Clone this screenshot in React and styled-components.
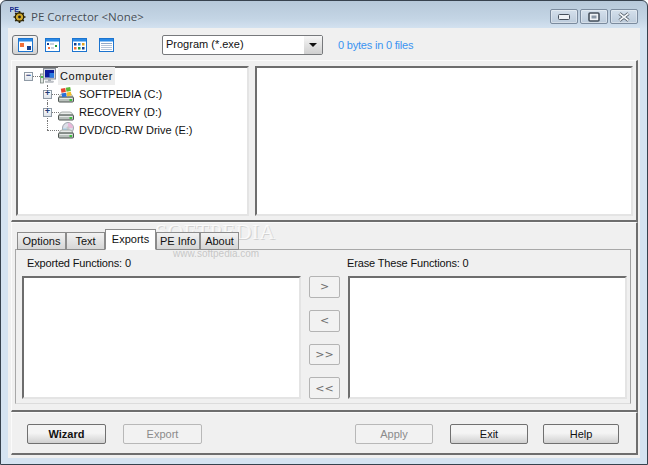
import styled, { createGlobalStyle } from 'styled-components';

const GlobalStyle = createGlobalStyle`
   html, body {
      margin: 0;
      padding: 0;
      background: #fff;
   }
`;

const UI_FONT = `'Liberation Sans', Arial, sans-serif`;

function AppIcon() {
   return (
      <svg width="17" height="17" viewBox="0 0 17 17">
         <text x="-0.5" y="6" fontSize="7" fontWeight="700" fontFamily="Liberation Sans" fill="#16288a">PE</text>
         <circle cx="9.5" cy="11" r="4.2" fill="#d1a92a" stroke="#2e2608" strokeWidth="1.3" />
         <circle cx="9.5" cy="11" r="1.4" fill="#1b1b1b" />
         <path d="M9.5 5v2.2M9.5 14.8v2.2M3.5 11h2.2M13.3 11h2.2M5.3 6.8l1.5 1.5M12.2 13.7l1.5 1.5M13.7 6.8l-1.5 1.5M6.8 13.7l-1.5 1.5" stroke="#2e2608" strokeWidth="1.7" />
      </svg>
   );
}

function ViewIcon({ kind }) {
   return (
      <svg width="15" height="14" viewBox="0 0 15 14">
         <rect x="0.5" y="0.5" width="14" height="13" fill="#fff" stroke="#1c74cf" />
         <rect x="1" y="1" width="13" height="2.5" fill="#2b8ae6" />
         {kind === 'large' && (
            <>
               <rect x="2" y="5" width="4" height="4" fill="#f0703a" />
               <rect x="9" y="8" width="4" height="4" fill="#14408f" />
            </>
         )}
         {kind === 'small' && (
            <>
               <rect x="2" y="5" width="2" height="2" fill="#14408f" />
               <rect x="5" y="5.5" width="4" height="1" fill="#9ab" />
               <rect x="3" y="9" width="2" height="2" fill="#f0703a" />
               <rect x="6" y="9.5" width="3" height="1" fill="#9ab" />
               <rect x="10" y="7" width="2" height="2" fill="#1f9d3a" />
            </>
         )}
         {kind === 'list' && (
            <>
               <rect x="2" y="5" width="2.5" height="2.5" fill="#14408f" />
               <rect x="6" y="5" width="2.5" height="2.5" fill="#1f7fd8" />
               <rect x="10" y="5" width="2.5" height="2.5" fill="#e0a020" />
               <rect x="2" y="9" width="2.5" height="2.5" fill="#f0703a" />
               <rect x="6" y="9" width="2.5" height="2.5" fill="#1f9d3a" />
               <rect x="10" y="9" width="2.5" height="2.5" fill="#14408f" />
            </>
         )}
         {kind === 'details' && (
            <>
               <rect x="2" y="5" width="11" height="1" fill="#8fa8c8" />
               <rect x="2" y="7" width="11" height="1" fill="#b5c4d8" />
               <rect x="2" y="9" width="11" height="1" fill="#b5c4d8" />
               <rect x="2" y="11" width="11" height="1" fill="#b5c4d8" />
            </>
         )}
      </svg>
   );
}

function ComputerIcon() {
   return (
      <svg width="16" height="17" viewBox="0 0 16 17">
         <rect x="0.5" y="6" width="3" height="9" fill="#dfe5e0" stroke="#7a8580" strokeWidth="0.8" />
         <rect x="1" y="8" width="2" height="2" fill="#4cc04c" />
         <rect x="3.5" y="0.5" width="12" height="10.5" fill="#d6d9de" stroke="#8a9098" />
         <rect x="5" y="2" width="9" height="7.5" fill="#0a1a9c" />
         <rect x="9.5" y="5" width="4.5" height="4.5" fill="#2a7ae0" />
         <rect x="8" y="11" width="3" height="2" fill="#aab0b6" />
         <rect x="5.5" y="13" width="8" height="1.5" fill="#c6cacf" stroke="#9a9fa6" strokeWidth="0.4" />
      </svg>
   );
}

function DriveBase() {
   return (
      <>
         <path d="M1 11 Q2 8 4 8 H12 Q14 8 15 11 Z" fill="#e8ebe9" stroke="#8a918d" strokeWidth="0.7" />
         <rect x="0.5" y="11" width="15" height="5" rx="1" fill="#b9c0bc" stroke="#4f5652" />
         <rect x="1.5" y="12" width="13" height="1" fill="#e6e9e7" />
         <rect x="11.5" y="13" width="2.5" height="2" fill="#3fc13f" />
      </>
   );
}

function DriveIcon({ kind }) {
   return (
      <svg width="16" height="17" viewBox="0 0 16 17">
         {kind === 'dvd' && (
            <>
               <circle cx="10" cy="6" r="5.5" fill="#dcdfe8" stroke="#8a8f9a" strokeWidth="0.8" />
               <path d="M10 1a5 5 0 0 1 5 5h-3.5a1.5 1.5 0 0 0-1.5-1.5z" fill="#e9b8d8" />
               <path d="M5 6a5 5 0 0 0 5 5V7.5A1.5 1.5 0 0 1 8.5 6z" fill="#b8d8ec" />
               <circle cx="10" cy="6" r="1" fill="#fff" stroke="#888" strokeWidth="0.5" />
            </>
         )}
         <DriveBase />
         {kind === 'system' && (
            <>
               <rect x="3" y="2.5" width="4.5" height="4" fill="#e8452c" transform="rotate(-10 5 4)" />
               <rect x="8" y="1.5" width="4.5" height="4" fill="#5fb83a" transform="rotate(-10 10 3)" />
               <rect x="3.8" y="7" width="4.5" height="4" fill="#2a6fd8" transform="rotate(-10 6 9)" />
               <rect x="8.8" y="6" width="4.5" height="4" fill="#f2c02a" transform="rotate(-10 11 8)" />
            </>
         )}
      </svg>
   );
}

function Tree() {
   return (
      <TreeRoot>
         <RootRow>
            <Expander>−</Expander>
            <ComputerIcon />
            <RootLabel>Computer</RootLabel>
         </RootRow>
         <ChildRow>
            <Expander>+</Expander>
            <DriveIcon kind="system" />
            <ChildLabel>SOFTPEDIA (C:)</ChildLabel>
         </ChildRow>
         <ChildRow>
            <Expander>+</Expander>
            <DriveIcon />
            <ChildLabel>RECOVERY (D:)</ChildLabel>
         </ChildRow>
         <ChildRow $last>
            <ExpanderGap />
            <DriveIcon kind="dvd" />
            <ChildLabel>DVD/CD-RW Drive (E:)</ChildLabel>
         </ChildRow>
      </TreeRoot>
   );
}

function App() {
   return (
      <Window>
         <GlobalStyle />
         <TitleBar>
            <AppIcon />
            <Title>PE Corrector &lt;None&gt;</Title>
            <Caption>
               <CaptionButton aria-label="minimize">
                  <svg width="12" height="6" viewBox="0 0 12 6"><rect x="0.5" y="0.5" width="11" height="5" rx="1" fill="#eef2f6" stroke="#46505c" /></svg>
               </CaptionButton>
               <CaptionButton aria-label="maximize">
                  <svg width="12" height="10" viewBox="0 0 12 10"><rect x="1" y="1" width="10" height="8" rx="1" fill="#eef2f6" stroke="#46505c" strokeWidth="1.6" /><rect x="3.5" y="3.5" width="5" height="3" fill="#8a97a6" /></svg>
               </CaptionButton>
               <CaptionButton aria-label="close">
                  <svg width="14" height="10" viewBox="0 0 14 10"><path d="M2.5 1.5L11.5 8.5M11.5 1.5L2.5 8.5" stroke="#4b5560" strokeWidth="3.4" /><path d="M2.5 1.5L11.5 8.5M11.5 1.5L2.5 8.5" stroke="#f2f5f8" strokeWidth="1.6" /></svg>
               </CaptionButton>
            </Caption>
         </TitleBar>

         <Client>
            <Toolbar>
               <ViewGroup>
                  <ViewButton $active><ViewIcon kind="large" /></ViewButton>
                  <ViewButton><ViewIcon kind="small" /></ViewButton>
                  <ViewButton><ViewIcon kind="list" /></ViewButton>
                  <ViewButton><ViewIcon kind="details" /></ViewButton>
               </ViewGroup>
               <Combo>
                  <ComboText>Program (*.exe)</ComboText>
                  <ComboArrow />
               </Combo>
               <Stats>0 bytes in 0 files</Stats>
            </Toolbar>

            <BrowseFrame>
               <TreePanel><Tree /></TreePanel>
               <FilePanel />
            </BrowseFrame>

            <TabFrame>
               <TabStrip>
                  <Tab $width={49}>Options</Tab>
                  <Tab $width={39}>Text</Tab>
                  <Tab $width={51} $active>Exports</Tab>
                  <Tab $width={44}>PE Info</Tab>
                  <Tab $width={39}>About</Tab>
               </TabStrip>
               <TabPane>
                  <LabelRow>
                     <Label>Exported Functions: 0</Label>
                     <Label $right>Erase These Functions: 0</Label>
                  </LabelRow>
                  <ListRow>
                     <LeftList />
                     <MoveColumn>
                        <MoveButton>&gt;</MoveButton>
                        <MoveButton>&lt;</MoveButton>
                        <MoveButton>&gt;&gt;</MoveButton>
                        <MoveButton>&lt;&lt;</MoveButton>
                     </MoveColumn>
                     <RightList />
                  </ListRow>
               </TabPane>
            </TabFrame>

            <ActionFrame>
               <ActionButton $width={79} $gap={17} $default>Wizard</ActionButton>
               <ActionButton $width={79} $gap={153} disabled>Export</ActionButton>
               <ActionButton $width={78} $gap={17} disabled>Apply</ActionButton>
               <ActionButton $width={78} $gap={15}>Exit</ActionButton>
               <ActionButton $width={76}>Help</ActionButton>
            </ActionFrame>
         </Client>

         <Watermark>
            <WatermarkTitle>SOFTPEDIA</WatermarkTitle>
            <WatermarkUrl>www.softpedia.com</WatermarkUrl>
         </Watermark>
      </Window>
   );
}

export default App;

const Window = styled.div`
   position: relative;
   box-sizing: border-box;
   width: 648px;
   height: 465px;
   display: flex;
   flex-direction: column;
   padding: 0 7px 6px;
   overflow: hidden;
   border: 1px solid #37424e;
   border-radius: 6px 6px 0 0;
   background: linear-gradient(#b6c8d9 0, #c4d5e5 18px, #d5e3f1 28px);
   font-family: ${UI_FONT};
   font-size: 11px;
   color: #111;
`;

const TitleBar = styled.div`
   height: 27px;
   flex: none;
   display: flex;
   align-items: center;
   gap: 4px;
   padding: 0 0 2px 2px;
   box-sizing: border-box;
   margin-right: 2px;
   svg {
      margin-top: 1px;
   }
`;

const Title = styled.div`
   flex: 1;
   font-family: 'Open Sans', ${UI_FONT};
   font-size: 11.5px;
   color: #474f58;
   text-shadow: 0 0 4px rgba(255, 255, 255, 0.6);
   margin-top: 6px;
`;

const Caption = styled.div`
   display: flex;
   gap: 2px;
   margin-top: 6px;
`;

const CaptionButton = styled.div`
   box-sizing: border-box;
   width: 28px;
   height: 15px;
   display: flex;
   align-items: center;
   justify-content: center;
   border: 1px solid #7b8b9e;
   border-radius: 2px;
   background: linear-gradient(#d4e0ec, #bccbdb);
   box-shadow: inset 0 0 0 1px rgba(255, 255, 255, 0.35);
`;

const Client = styled.div`
   flex: 1;
   min-height: 0;
   display: flex;
   flex-direction: column;
   background: #f0f0f0;
`;

const Toolbar = styled.div`
   height: 32px;
   flex: none;
   box-sizing: border-box;
   display: flex;
   align-items: center;
   padding: 1px 0 0 4px;
`;

const ViewGroup = styled.div`
   display: flex;
   gap: 1px;
   width: 150px;
`;

const ViewButton = styled.div`
   box-sizing: border-box;
   width: 26px;
   height: 20px;
   display: flex;
   align-items: center;
   justify-content: center;
   border: 1px solid ${(p) => (p.$active ? '#6f7378' : 'transparent')};
   border-radius: 3px;
   background: ${(p) => (p.$active ? 'linear-gradient(#f3f3f3, #d2d2d2)' : 'transparent')};
`;

const Combo = styled.div`
   box-sizing: border-box;
   width: 161px;
   height: 20px;
   display: flex;
   align-items: stretch;
   border: 1px solid #77797c;
   border-radius: 2px;
   background: #fff;
`;

const ComboText = styled.div`
   flex: 1;
   padding-left: 3px;
   line-height: 17px;
`;

const ComboArrow = styled.div`
   width: 18px;
   position: relative;
   background: linear-gradient(#f6f6f6, #cfcfcf);
   &::after {
      content: '';
      position: absolute;
      left: 5px;
      top: 7px;
      border-left: 4px solid transparent;
      border-right: 4px solid transparent;
      border-top: 4px solid #111;
   }
`;

const Stats = styled.div`
   margin-left: 15px;
   color: #3a93f0;
   letter-spacing: -0.2px;
`;

const BrowseFrame = styled.div`
   height: 162px;
   flex: none;
   box-sizing: border-box;
   display: flex;
   gap: 6px;
   margin: 0 2px 0 3px;
   padding: 5px 0 0 4px;
   border-top: 1px solid #fbfbfb;
   border-left: 1px solid #fbfbfb;
   border-right: 2px solid #6e6e6e;
   border-bottom: 2px solid #6e6e6e;
`;

const Sunken = styled.div`
   box-sizing: border-box;
   background: #fff;
   border-top: 2px solid #6d6d6d;
   border-left: 2px solid #6d6d6d;
   border-right: 2px solid #e4e4e4;
   border-bottom: 2px solid #e4e4e4;
`;

const TreePanel = styled(Sunken)`
   width: 233px;
   height: 150px;
`;

const FilePanel = styled(Sunken)`
   width: 378px;
   height: 150px;
`;

const TreeRoot = styled.div`
   display: flex;
   flex-direction: column;
   margin-top: -1px;
   padding: 0 0 0 6px;
`;

const RootRow = styled.div`
   height: 18px;
   display: flex;
   align-items: center;
   gap: 7px;
   position: relative;
   &::before {
      content: '';
      position: absolute;
      left: 9px;
      width: 7px;
      top: 9px;
      border-top: 1px dotted #777;
   }
`;

const ChildRow = styled.div`
   height: 18px;
   margin-left: 19px;
   display: flex;
   align-items: center;
   gap: 6px;
   position: relative;
   &::before {
      content: '';
      position: absolute;
      left: 4px;
      width: 12px;
      top: 9px;
      border-top: 1px dotted #777;
   }
   &::after {
      content: '';
      position: absolute;
      left: 4px;
      top: 0;
      height: ${(p) => (p.$last ? '9px' : '18px')};
      border-left: 1px dotted #777;
   }
`;

const Expander = styled.div`
   box-sizing: border-box;
   position: relative;
   z-index: 1;
   width: 9px;
   height: 9px;
   display: flex;
   align-items: center;
   justify-content: center;
   border: 1px solid #8f9aa5;
   background: linear-gradient(#fff, #dde3ea);
   color: #1c3c78;
   font: 700 9px/7px 'Liberation Mono', monospace;
`;

const ExpanderGap = styled.div`
   width: 9px;
`;

const RootLabel = styled.div`
   height: 18px;
   line-height: 18px;
   padding: 0 2px;
   margin-left: -5px;
   background: #ededed;
   letter-spacing: 0.6px;
`;

const ChildLabel = styled.div`
   line-height: 18px;
   margin-left: -1px;
`;

const TabFrame = styled.div`
   height: 190px;
   flex: none;
   box-sizing: border-box;
   display: flex;
   flex-direction: column;
   margin: 0 2px 0 3px;
   padding: 7px 5px 0 3px;
   border-left: 1px solid #fbfbfb;
   border-top: 1px solid #fbfbfb;
   border-right: 2px solid #6e6e6e;
   border-bottom: 2px solid #6e6e6e;
`;

const TabStrip = styled.div`
   height: 20px;
   flex: none;
   display: flex;
   align-items: flex-end;
   padding-left: 2px;
   position: relative;
   z-index: 1;
   margin-bottom: -1px;
`;

const Tab = styled.div`
   box-sizing: border-box;
   width: ${(p) => p.$width}px;
   height: ${(p) => (p.$active ? '21px' : '18px')};
   line-height: ${(p) => (p.$active ? '19px' : '17px')};
   text-align: center;
   border: 1px solid #8c8c8c;
   border-bottom: 1px solid ${(p) => (p.$active ? '#fff' : '#8c8c8c')};
   background: ${(p) => (p.$active ? '#fff' : 'linear-gradient(#f2f2f2, #d6d6d6)')};
`;

const TabPane = styled.div`
   flex: 1;
   min-height: 0;
   margin-bottom: 6px;
   box-sizing: border-box;
   display: flex;
   flex-direction: column;
   padding: 0 3px 4px 6px;
   border: 1px solid #a0a0a0;
   border-color: #a8a8a8 #a0a0a0 #dcdcdc #a8a8a8;
`;

const LabelRow = styled.div`
   height: 26px;
   flex: none;
   display: flex;
   align-items: center;
   padding-left: 5px;
   letter-spacing: -0.15px;
`;

const Label = styled.div`
   margin-left: ${(p) => (p.$right ? 'auto' : '0')};
   width: ${(p) => (p.$right ? '280px' : 'auto')};
`;

const ListRow = styled.div`
   flex: 1;
   min-height: 0;
   display: flex;
`;

const LeftList = styled(Sunken)`
   width: 279px;
`;

const RightList = styled(Sunken)`
   width: 279px;
`;

const MoveColumn = styled.div`
   width: 47px;
   display: flex;
   flex-direction: column;
   align-items: center;
   gap: 12px;
`;

const MoveButton = styled.div`
   box-sizing: border-box;
   width: 31px;
   height: 22px;
   display: flex;
   align-items: center;
   justify-content: center;
   border: 1px solid #b4b4b4;
   border-radius: 2px;
   background: #f2f2f2;
   color: #6e6e6e;
   font-family: 'DejaVu Sans', sans-serif;
   font-size: 11px;
`;

const ActionFrame = styled.div`
   height: 43px;
   flex: none;
   box-sizing: border-box;
   display: flex;
   align-items: center;
   margin: 0 2px 0 3px;
   padding: 1px 0 0 15px;
   border-left: 1px solid #fbfbfb;
   border-top: 1px solid #fbfbfb;
   border-right: 2px solid #6e6e6e;
   border-bottom: 2px solid #6e6e6e;
`;

const ActionButton = styled.div`
   box-sizing: border-box;
   width: ${(p) => p.$width}px;
   height: 20px;
   margin-right: ${(p) => p.$gap || 0}px;
   display: flex;
   align-items: center;
   justify-content: center;
   border: 1px solid ${(p) => (p.disabled ? '#b8b8b8' : '#707070')};
   border-radius: 2px;
   background: ${(p) => (p.disabled ? '#f2f2f2' : 'linear-gradient(#f4f4f4 45%, #d0d0d0)')};
   color: ${(p) => (p.disabled ? '#8b8b8b' : '#111')};
   font-weight: ${(p) => (p.$default ? 700 : 400)};
`;

const Watermark = styled.div`
   position: absolute;
   left: 154px;
   top: 221px;
   width: 130px;
   pointer-events: none;
`;

const WatermarkTitle = styled.div`
   font-family: 'Liberation Serif', serif;
   font-size: 22px;
   line-height: 20px;
   letter-spacing: 0.2px;
   color: rgba(255, 255, 255, 0.75);
   text-shadow: 1px 1px 0 rgba(150, 150, 150, 0.35);
`;

const WatermarkUrl = styled.div`
   margin: 6px 0 0 18px;
   font-size: 10px;
   line-height: 12px;
   color: rgba(170, 170, 170, 0.6);
`;
